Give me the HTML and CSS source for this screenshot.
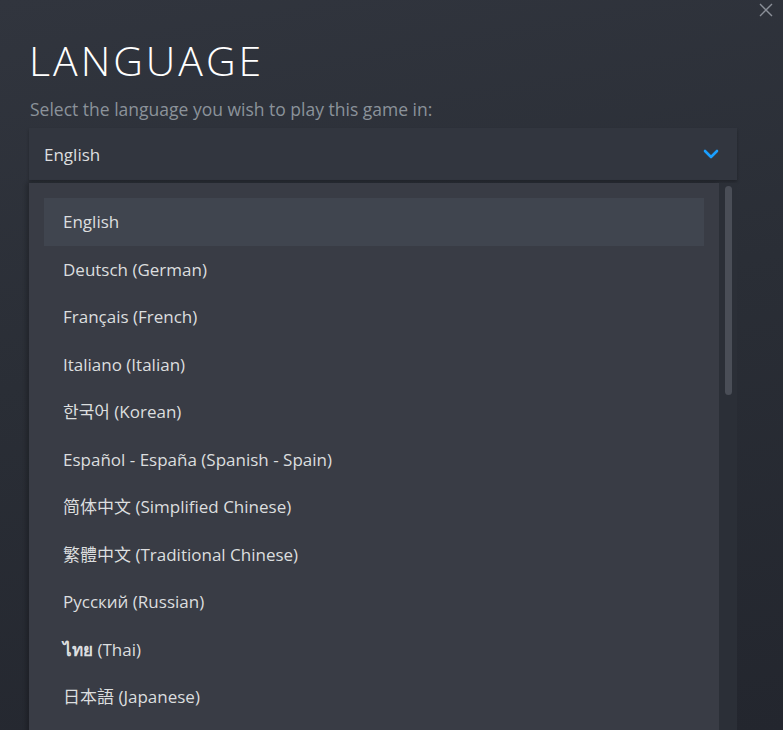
FILE: index.html
```html
<!DOCTYPE html>
<html lang="en">
<head>
    <meta charset="UTF-8">
    <title>Language</title>
    <link rel="stylesheet" href="styles.css">
</head>
<body>
    <div class="dialog">
        <button class="close" aria-label="Close">
            <svg width="14" height="14" viewBox="0 0 14 14"><path d="M1 1 L13 13 M13 1 L1 13" stroke="#8a8f98" stroke-width="1.4" fill="none"/></svg>
        </button>
        <h1 class="title">LANGUAGE</h1>
        <p class="subtitle">Select the language you wish to play this game in:</p>

        <div class="select">
            <span>English</span>
            <svg class="chevron" width="16" height="10" viewBox="0 0 16 10"><path d="M2 2 L8 8 L14 2" stroke="#1a9fff" stroke-width="2.6" fill="none" stroke-linecap="round" stroke-linejoin="round"/></svg>
        </div>

        <div class="dropdown-wrap">
            <ul class="dropdown">
                <li class="active">English</li>
                <li>Deutsch (German)</li>
                <li>Français (French)</li>
                <li>Italiano (Italian)</li>
                <li>한국어 (Korean)</li>
                <li>Español - España (Spanish - Spain)</li>
                <li>简体中文 (Simplified Chinese)</li>
                <li>繁體中文 (Traditional Chinese)</li>
                <li>Русский (Russian)</li>
                <li><b>ไทย</b> (Thai)</li>
                <li>日本語 (Japanese)</li>
            </ul>
            <div class="scrollbar"><div class="thumb"></div></div>
        </div>
    </div>
</body>
</html>
```

FILE: styles.css
```css
html, body {
    margin: 0;
    height: 100%;
    overflow: hidden;
}
body {
    font-family: 'Open Sans', 'Noto Sans', 'Noto Sans CJK SC', sans-serif;
    background: linear-gradient(170deg, #31353e 0%, #2a2e36 45%, #23262e 100%);
    color: #dcdedf;
}
.dialog {
    position: relative;
    padding: 38px 46px 0 29px;
}
.close {
    position: absolute;
    top: 3px;
    right: 10px;
    background: none;
    border: none;
    padding: 0;
    cursor: pointer;
}
.title {
    margin: 0;
    font-weight: 300;
    font-size: 41px;
    line-height: 44px;
    letter-spacing: 3px;
    color: #ffffff;
}
.subtitle {
    margin: 17px 0 9px 1px;
    font-size: 17.5px;
    line-height: 20px;
    color: #8b929a;
}
.select {
    display: flex;
    justify-content: space-between;
    align-items: center;
    height: 52px;
    padding: 0 18px 0 15px;
    background-color: #32363f;
    box-shadow: 0 2px 3px rgba(0, 0, 0, 0.25);
    font-size: 17px;
}
.dropdown-wrap {
    display: flex;
    margin-top: 3px;
}
.dropdown {
    list-style: none;
    flex: 1;
    margin: 0;
    padding: 15px 15px 60px 15px;
    background-color: #393c45;
    box-shadow: -3px 0 4px rgba(0, 0, 0, 0.2);
}
.dropdown li {
    height: 47.5px;
    line-height: 47.5px;
    padding-left: 19px;
    font-size: 17px;
    color: #dcdedf;
    white-space: nowrap;
}
.dropdown li.active {
    background-color: #40454f;
}
.dropdown li b {
    font-weight: 700;
}
.scrollbar {
    width: 18px;
    padding-top: 3px;
    background-color: #2b2f37;
    display: flex;
    justify-content: center;
    align-items: flex-start;
}
.thumb {
    width: 7px;
    height: 209px;
    border-radius: 4px;
    background-color: #4a4e57;
}
```
